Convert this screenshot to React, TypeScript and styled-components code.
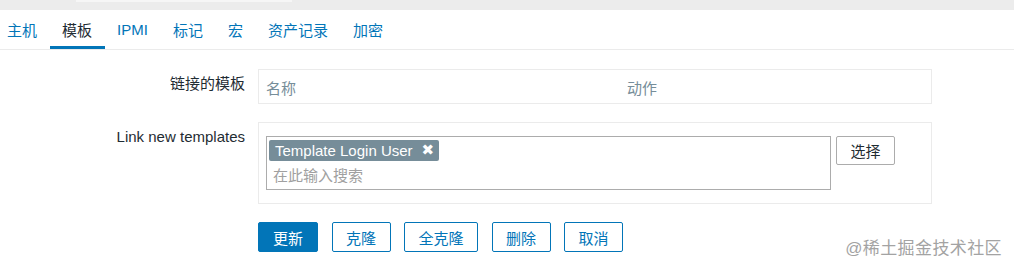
import React from "react";
import styled, { createGlobalStyle } from "styled-components";

const Global = createGlobalStyle`
  html, body { margin: 0; padding: 0; background: #fff; }
  body {
    font-family: "Liberation Sans", Arial, "Noto Sans CJK SC", sans-serif;
    font-size: 15px;
    color: #1f2c33;
  }
  * { box-sizing: border-box; }
`;

const Page = styled.div`
  position: relative;
  width: 1014px;
  height: 268px;
  overflow: hidden;
`;

const TopStrip = styled.div`
  height: 10px;
  background: #ececec;
  display: flex;
  align-items: flex-start;
`;

const TopField = styled.div`
  margin-left: 76px;
  width: 216px;
  height: 2px;
  background: #f6f6f6;
`;

const TabBar = styled.nav`
  display: flex;
  height: 40px;
  border-bottom: 1px solid #ebebeb;
  margin-left: -5.5px;
`;

const Tab = styled.a<{ $active?: boolean }>`
  display: flex;
  align-items: center;
  padding: 3px 12.5px 0;
  height: 39px;
  font-size: 15px;
  text-decoration: none;
  cursor: pointer;
  color: ${(p) => (p.$active ? "#1f2c33" : "#0275b8")};
  border-bottom: 3px solid ${(p) => (p.$active ? "#0275b8" : "transparent")};
`;

const Form = styled.div`
  display: grid;
  grid-template-columns: 245px 674px;
  column-gap: 13px;
  row-gap: 18px;
  padding-top: 19px;
`;

const Label = styled.div<{ $pad: number }>`
  text-align: right;
  padding-top: ${(p) => p.$pad}px;
  font-size: 15px;
  line-height: 18px;
  color: #1f2c33;
`;

const TableBox = styled.div`
  border: 1px solid #ebebeb;
  height: 35px;
  display: grid;
  grid-template-columns: 361px 1fr;
  align-items: center;
  padding-left: 7px;
`;

const Th = styled.div`
  color: #768d99;
  font-size: 15px;
  padding-top: 2px;
`;

const FieldBox = styled.div`
  border: 1px solid #ebebeb;
  height: 82px;
  padding: 13px 0 0 7px;
  display: flex;
  align-items: flex-start;
  gap: 5px;
`;

const MultiSelect = styled.div`
  width: 565px;
  height: 54px;
  border: 1px solid #acacac;
  padding: 3px 2px 0;
  display: flex;
  flex-direction: column;
  align-items: flex-start;
`;

const Tag = styled.span`
  display: inline-flex;
  align-items: center;
  gap: 9px;
  height: 21px;
  padding: 0 5px 0 6px;
  background: #768d99;
  color: #fff;
  border-radius: 2px;
  font-size: 15px;
`;

const TagClose = styled.span`
  font-size: 15px;
  font-weight: bold;
  font-family: "DejaVu Sans", sans-serif;
  line-height: 1;
`;

const Placeholder = styled.span`
  color: #a0a0a0;
  font-size: 15px;
  margin: 3px 0 0 4px;
`;

const SelectBtn = styled.button`
  width: 59px;
  height: 29px;
  border: 1px solid #acacac;
  border-radius: 2px;
  background: #fff;
  color: #1f2c33;
  font-family: inherit;
  font-size: 15px;
  padding: 0;
`;

const Actions = styled.div`
  grid-column: 2;
  display: flex;
  gap: 13.5px;
`;

const Btn = styled.button<{ $primary?: boolean }>`
  height: 30px;
  padding: 0 ${(p) => (p.$primary ? 14 : 13.5)}px;
  border: 1px solid #0275b8;
  border-radius: 2px;
  font-family: inherit;
  font-size: 15px;
  background: ${(p) => (p.$primary ? "#0275b8" : "#fff")};
  color: ${(p) => (p.$primary ? "#fff" : "#0275b8")};
`;

const Watermark = styled.div`
  position: absolute;
  right: 12px;
  bottom: 9px;
  color: #a3a3a3;
  font-size: 17px;
  letter-spacing: 0.4px;
`;

const tabs = ["主机", "模板", "IPMI", "标记", "宏", "资产记录", "加密"];

export default function App() {
  return (
    <Page>
      <Global />
      <TopStrip>
        <TopField />
      </TopStrip>
      <TabBar>
        {tabs.map((t) => (
          <Tab key={t} $active={t === "模板"}>
            {t}
          </Tab>
        ))}
      </TabBar>
      <Form>
        <Label $pad={6}>链接的模板</Label>
        <TableBox>
          <Th>名称</Th>
          <Th>动作</Th>
        </TableBox>
        <Label $pad={6}>Link new templates</Label>
        <FieldBox>
          <MultiSelect>
            <Tag>
              Template Login User<TagClose>✖</TagClose>
            </Tag>
            <Placeholder>在此输入搜索</Placeholder>
          </MultiSelect>
          <SelectBtn>选择</SelectBtn>
        </FieldBox>
        <Actions>
          <Btn $primary>更新</Btn>
          <Btn>克隆</Btn>
          <Btn>全克隆</Btn>
          <Btn>删除</Btn>
          <Btn>取消</Btn>
        </Actions>
      </Form>
      <Watermark>@稀土掘金技术社区</Watermark>
    </Page>
  );
}
